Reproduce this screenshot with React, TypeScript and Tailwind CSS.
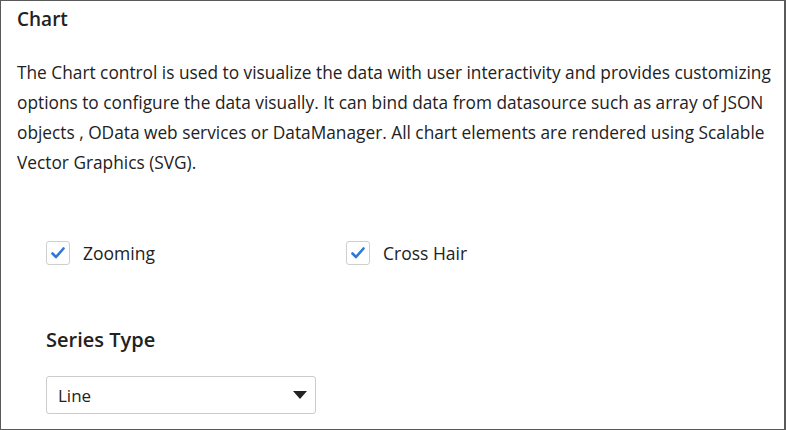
import React from "react";

function Check({ label }: { label: string }) {
  return (
    <div className="flex items-center">
      <div className="w-[24px] h-[24px] border border-[#cfcfcf] rounded-[3px] flex items-center justify-center bg-white">
        <svg width="16" height="14" viewBox="0 0 16 14">
          <path d="M2.5 7.5 L6 11 L13.5 2.5" fill="none" stroke="#2f78d3" strokeWidth="2.6" strokeLinecap="round" strokeLinejoin="round" />
        </svg>
      </div>
      <span className="ml-[13px] text-[17.5px] text-[#222]">{label}</span>
    </div>
  );
}

export default function App() {
  return (
    <div
      className="w-[786px] h-[430px] border border-[#5a5a5a] border-r-2 bg-white overflow-hidden"
      style={{ fontFamily: '"Open Sans", "Noto Sans", sans-serif' }}
    >
      <div className="px-[16px] pt-[4px]">
        <h1 className="text-[19px] font-semibold text-[#222] leading-[28px]">Chart</h1>
        <p className="mt-[25px] text-[17.3px] leading-[30px] text-[#222] whitespace-nowrap">
          The Chart control is used to visualize the data with user interactivity and provides customizing
          <br />
          options to configure the data visually. It can bind data from datasource such as array of JSON
          <br />
          objects , OData web services or DataManager. All chart elements are rendered using Scalable
          <br />
          Vector Graphics (SVG).
        </p>
        <div className="mt-[62px] ml-[29px] flex">
          <div className="w-[300px]">
            <Check label="Zooming" />
          </div>
          <Check label="Cross Hair" />
        </div>
        <div className="ml-[29px] mt-[59px] text-[20px] font-semibold text-[#222]">Series Type</div>
        <div className="ml-[29px] mt-[21px] w-[270px] h-[38px] border border-[#cccccc] rounded-[3px] flex items-center justify-between pl-[11px] pr-[8px]">
          <span className="text-[17px] text-[#222]">Line</span>
          <svg width="14" height="8" viewBox="0 0 14 8">
            <path d="M0 0 L14 0 L7 8 Z" fill="#222" />
          </svg>
        </div>
      </div>
    </div>
  );
}
